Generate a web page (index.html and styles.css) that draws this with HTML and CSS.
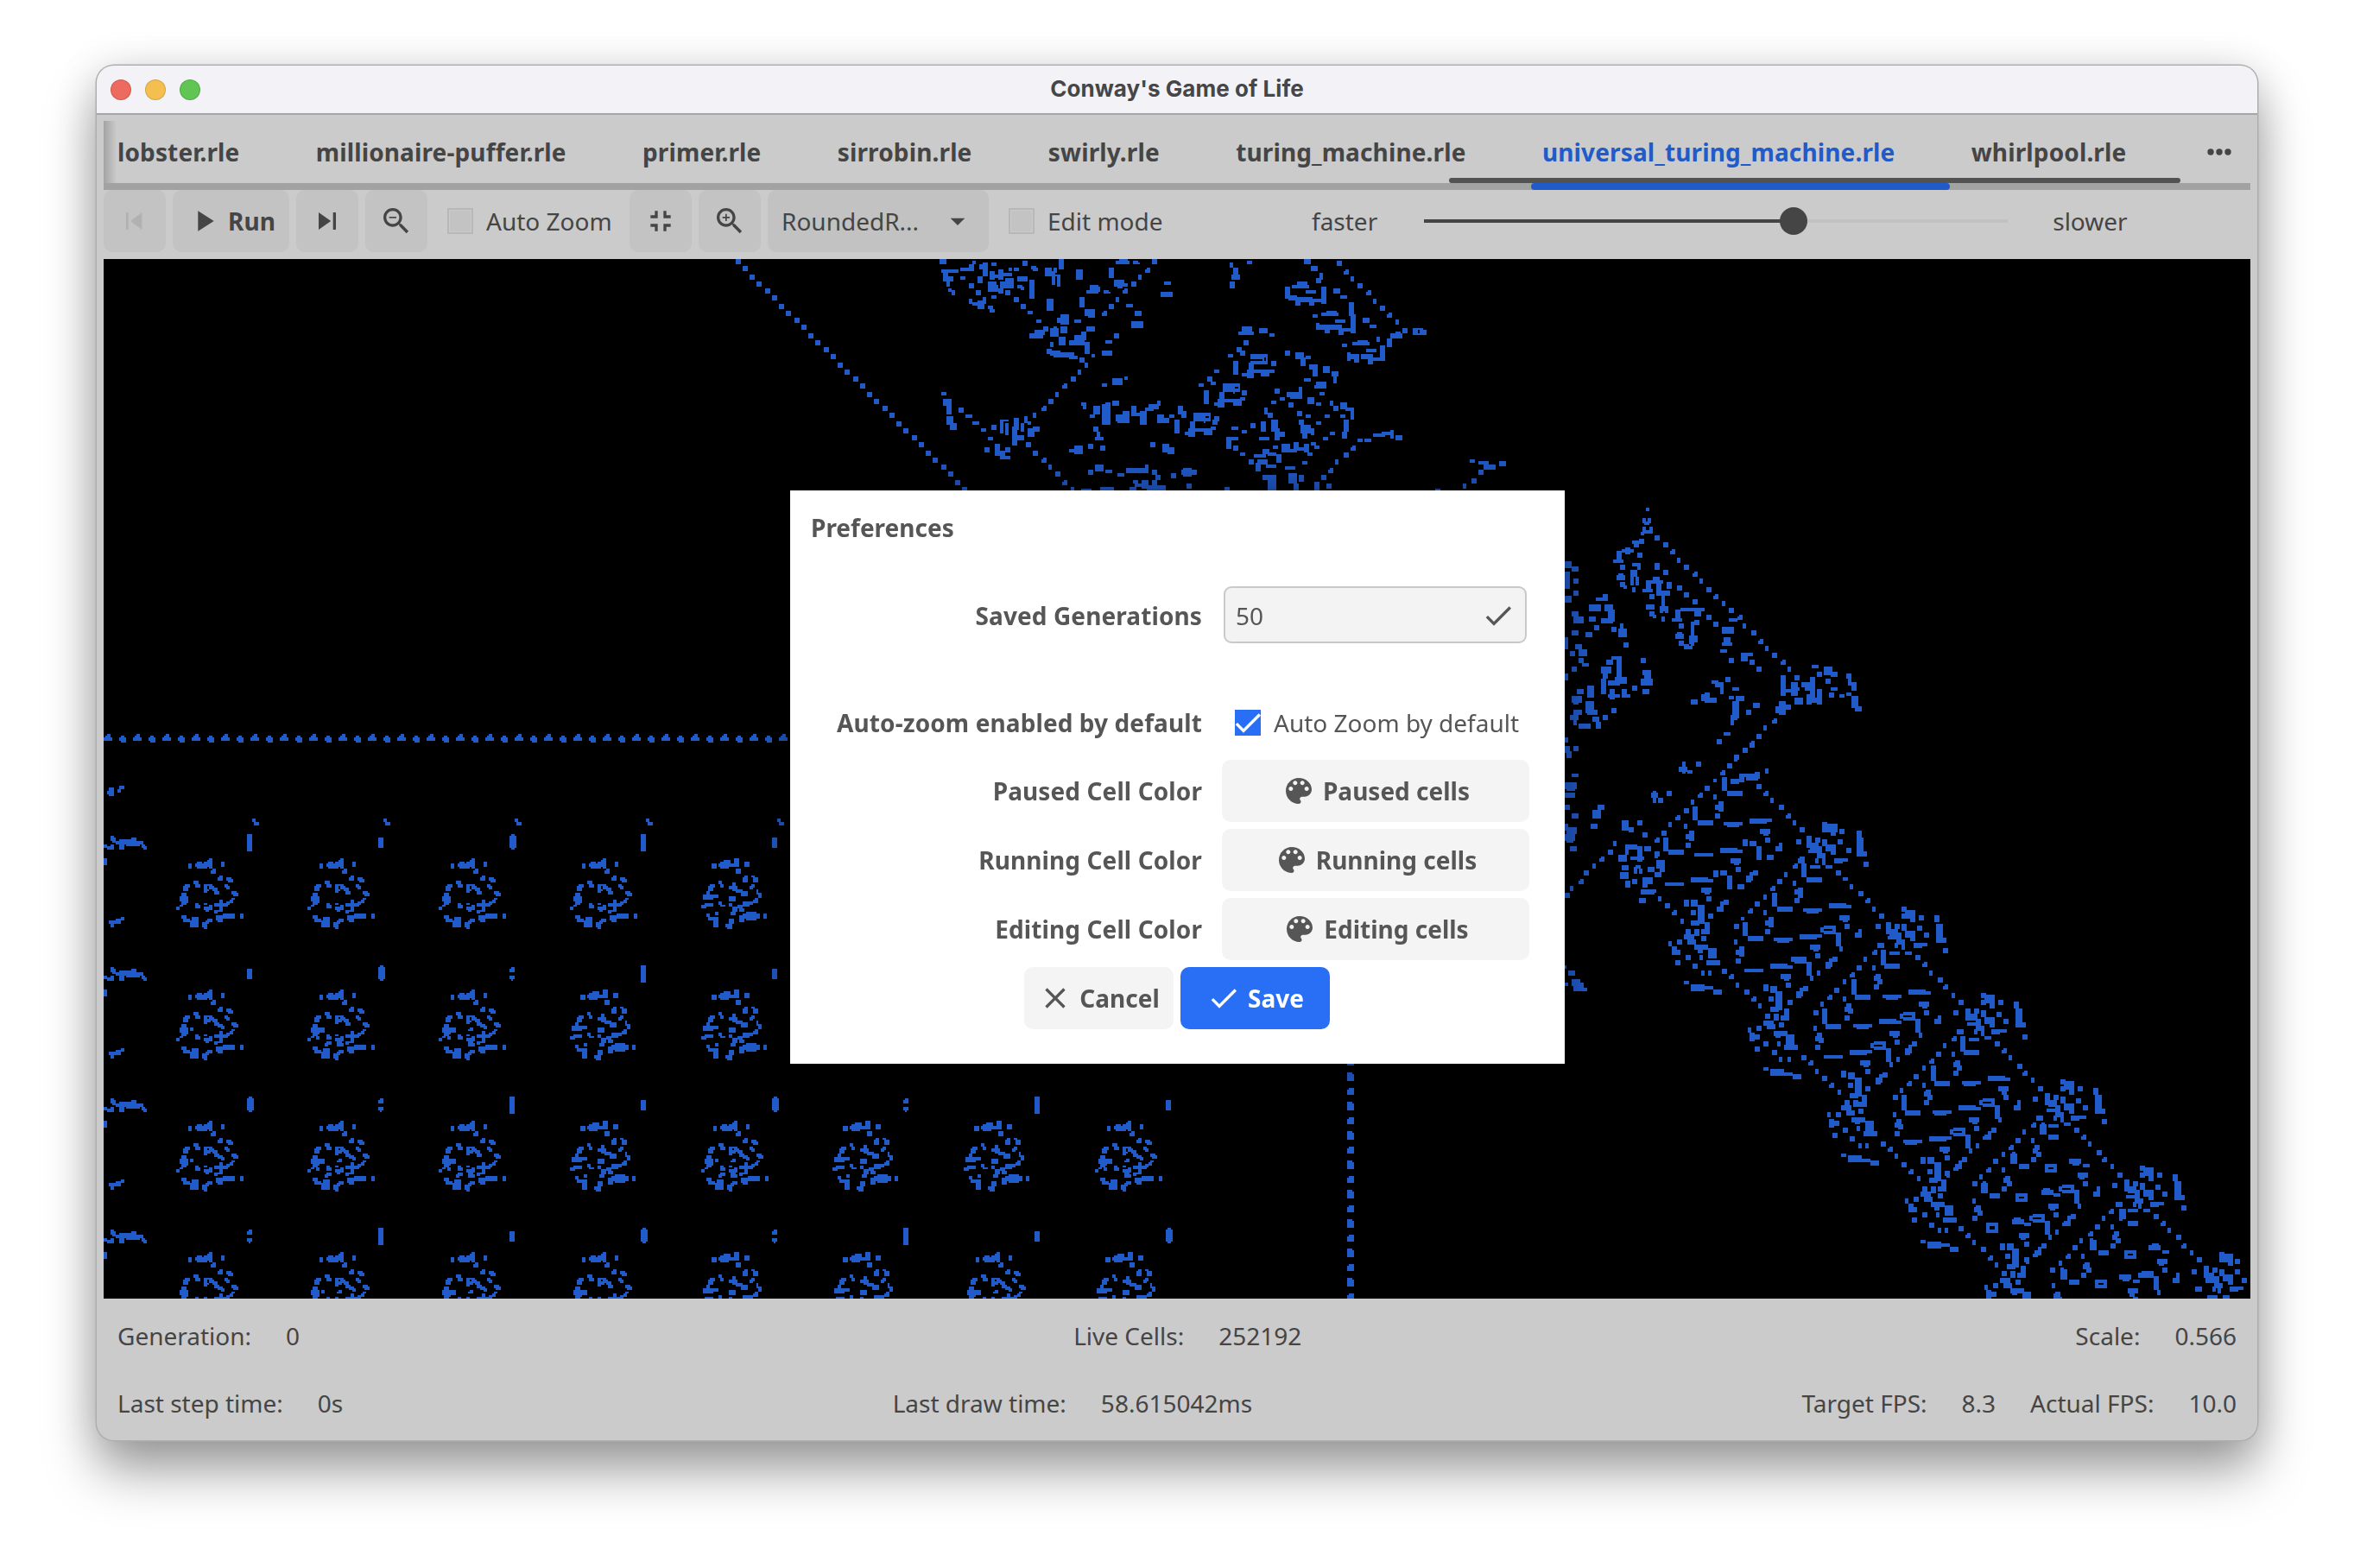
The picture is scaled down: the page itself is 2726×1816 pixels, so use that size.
FILE: index.html
```html
<!DOCTYPE html>
<html lang="en">
<head>
<meta charset="utf-8">
<title>Conway's Game of Life</title>
<link rel="stylesheet" href="styles.css">
</head>
<body>
<svg class="defs" width="0" height="0">
  <symbol id="palette" viewBox="0 0 24 24"><path d="M12 3c-4.97 0-9 4.03-9 9s4.03 9 9 9c.83 0 1.5-.67 1.5-1.5 0-.39-.15-.74-.39-1.01-.23-.26-.38-.61-.38-.99 0-.83.67-1.5 1.5-1.5H16c2.76 0 5-2.24 5-5 0-4.42-4.03-8-9-8zm-5.5 9c-.83 0-1.5-.67-1.5-1.5S5.67 9 6.5 9 8 9.67 8 10.500 7.330 12 6.500 12zm3-4C8.670 8 8 7.330 8 6.500S8.670 5 9.500 5s1.500.67 1.500 1.500S10.330 8 9.500 8zm5 0c-.83 0-1.500-.67-1.500-1.500S13.670 5 14.500 5s1.500.67 1.500 1.500S15.330 8 14.500 8zm3 4c-.83 0-1.500-.67-1.500-1.500S16.670 9 17.500 9s1.500.67 1.500 1.500-.67 1.500-1.500 1.500z"/></symbol>
  <symbol id="check" viewBox="0 0 24 24"><path d="M9 16.170L4.830 12l-1.420 1.410L9 19 21 7l-1.410-1.410z"/></symbol>
  <symbol id="lens" viewBox="0 0 24 24"><path d="M15.500 14h-.79l-.28-.27C15.410 12.590 16 11.110 16 9.500 16 5.910 13.090 3 9.500 3S3 5.910 3 9.500 5.910 16 9.500 16c1.610 0 3.090-.59 4.230-1.570l.27.28v.79l5 4.990L20.490 19l-4.990-5zm-6 0C7.010 14 5 11.990 5 9.500S7.010 5 9.500 5 14 7.010 14 9.500 11.990 14 9.500 14z"/></symbol>
</svg>
<main class="window">
  <header class="titlebar">
    <div class="lights"><i class="light red"></i><i class="light amber"></i><i class="light green"></i></div>
    <h1>Conway's Game of Life</h1>
  </header>
  <nav class="tabs">
    <span>lobster.rle</span><span>millionaire-puffer.rle</span><span>primer.rle</span><span>sirrobin.rle</span><span>swirly.rle</span><span>turing_machine.rle</span><span class="active">universal_turing_machine.rle</span><span>whirlpool.rle</span>
    <svg class="more" viewBox="0 0 28 8"><circle cx="4" cy="4" r="3.700"/><circle cx="14" cy="4" r="3.700"/><circle cx="24" cy="4" r="3.700"/></svg>
    <i class="scroll"></i><i class="marker"></i>
  </nav>
  <section class="toolbar">
    <button class="btn off"><svg class="icon" viewBox="0 0 24 24"><path d="M6 6h1.600v12H6zm3 6l8 6V6z"/></svg></button>
    <button class="btn run"><svg class="icon" viewBox="0 0 24 24"><path d="M8 5v14l11-7z"/></svg>Run</button>
    <button class="btn"><svg class="icon" viewBox="0 0 24 24"><path d="M6 18l8.500-6L6 6v12zM16 6v12h2V6h-2z"/></svg></button>
    <button class="btn"><svg class="icon" viewBox="0 0 24 24"><use href="#lens"/><path d="M7 9h5v1H7z"/></svg></button>
    <label class="check auto"><i class="box"></i>Auto Zoom</label>
    <button class="btn"><svg class="icon" viewBox="0 0 24 24"><path d="M5 16h3v3h2v-5H5v2zm3-8H5v2h5V5H8v3zm6 11h2v-3h3v-2h-5v5zm2-11V5h-2v5h5V8h-3z"/></svg></button>
    <button class="btn"><svg class="icon" viewBox="0 0 24 24"><use href="#lens"/><path d="M12 10h-2v2H9v-2H7V9h2V7h1v2h2v1z"/></svg></button>
    <div class="select"><span>RoundedR...</span><svg class="icon" viewBox="0 0 24 24"><path d="M7 10l5 5 5-5z"/></svg></div>
    <label class="check edit"><i class="box"></i>Edit mode</label>
    <span class="faster">faster</span>
    <div class="slider"><i class="done"></i><i class="thumb"></i></div>
    <span class="slower">slower</span>
  </section>
  <canvas class="world" id="world" width="2486" height="1204"></canvas>
  <footer class="status">
    <div class="row"><div><span>Generation:</span><span>0</span></div><div><span>Live Cells:</span><span>252192</span></div><div><span>Scale:</span><span>0.566</span></div></div>
    <div class="row"><div><span>Last step time:</span><span>0s</span></div><div><span>Last draw time:</span><span>58.615042ms</span></div><div><span>Target FPS:</span><span>8.3</span><span>Actual FPS:</span><span>10.0</span></div></div>
  </footer>
  <section class="dialog">
    <h2>Preferences</h2>
    <div class="form">
      <b class="saved">Saved Generations</b><div class="entry"><span>50</span><svg class="icon" viewBox="0 0 24 24"><use href="#check"/></svg></div>
      <b class="spaced">Auto-zoom enabled by default</b><label class="check spaced"><i class="box on"><svg viewBox="3 3 18 18"><use href="#check" width="24" height="24"/></svg></i>Auto Zoom by default</label>
      <b>Paused Cell Color</b><button class="btn"><svg class="icon" viewBox="0 0 24 24"><use href="#palette"/></svg>Paused cells</button>
      <b>Running Cell Color</b><button class="btn"><svg class="icon" viewBox="0 0 24 24"><use href="#palette"/></svg>Running cells</button>
      <b>Editing Cell Color</b><button class="btn"><svg class="icon" viewBox="0 0 24 24"><use href="#palette"/></svg>Editing cells</button>
    </div>
    <div class="actions">
      <button class="btn"><svg class="icon" viewBox="0 0 24 24"><path d="M19 6.410L17.590 5 12 10.590 6.410 5 5 6.410 10.590 12 5 17.590 6.410 19 12 13.410 17.590 19 19 17.590 13.410 12z"/></svg>Cancel</button>
      <button class="btn primary"><svg class="icon" viewBox="0 0 24 24"><use href="#check"/></svg>Save</button>
    </div>
  </section>
</main>
<script src="world.js"></script>
</body>
</html>
```
FILE: styles.css
```css
* { box-sizing: border-box; margin: 0; padding: 0; }
body { width: 2726px; height: 1816px; overflow: hidden; padding: 76px 112px; background: #fff; font: 28px/38px "Noto Sans", sans-serif; color: #454545; }
.defs { position: absolute; }
svg { display: block; fill: currentColor; }
.window { position: relative; width: 2502px; height: 1592px; display: flex; flex-direction: column; background: #cbcbcb; border-radius: 20px; box-shadow: 0 0 0 1.500px #aeaeae, 0 36px 60px rgba(0,0,0,.36), 0 4px 50px rgba(0,0,0,.14); }
.titlebar { position: relative; height: 57px; flex: none; display: flex; align-items: center; justify-content: center; padding-bottom: 1px; background: #f3f2f7; border-bottom: 2px solid #a6a6a8; border-radius: 20px 20px 0 0; }
.titlebar h1 { font: bold 26px/30px Inter, sans-serif; color: #464648; letter-spacing: .05px; }
.lights { position: absolute; left: 16px; top: 16px; display: flex; gap: 16px; }
.light { width: 24px; height: 24px; border-radius: 50%; border: 1px solid rgba(0,0,0,.14); }
.red { background: #ed6a5e; } .amber { background: #f5bf4f; } .green { background: #61c554; }
.tabs { position: relative; margin: 7px 8px 0; height: 80px; flex: none; display: flex; align-items: center; gap: 88.4px; padding: 0 22px 0 16px; font-weight: bold; letter-spacing: .13px; border-bottom: 8px solid #a2a2a2; }
.tabs::before { content: ""; position: absolute; left: 0; top: 0; width: 15px; height: 72px; background: linear-gradient(90deg, #a3a3a3, #cbcbcb); z-index: 0; }
.tabs span { position: relative; white-space: nowrap; }
.tabs .active { color: #215bca; }
.more { width: 28px; height: 8px; margin-left: auto; }
.scroll { position: absolute; left: 1558px; top: 66px; width: 847px; height: 6px; border-radius: 3px; background: #525252; }
.marker { position: absolute; left: 1653px; top: 72px; width: 485px; height: 8px; border-radius: 4px; background: #215bca; }
.toolbar { margin: 0 8px 8px; height: 72px; flex: none; display: flex; align-items: center; gap: 8px; }
.btn { width: 72px; height: 72px; flex: none; display: flex; align-items: center; justify-content: center; gap: 8px; border: 0; border-radius: 10px; background: #c3c3c3; color: inherit; font: bold 28px/38px "Noto Sans", sans-serif; white-space: nowrap; }
.btn.off { color: #b1b1b1; }
.btn.run { width: 135px; }
.icon { width: 40px; height: 40px; flex: none; }
.check { display: flex; align-items: center; gap: 15px; padding-left: 15px; white-space: nowrap; }
.auto { width: 218px; }
.edit { width: 358px; }
.box { width: 30px; height: 30px; border: 2px solid #b8b8b8; background: #c3c3c3; box-shadow: inset 0 0 0 1px #cbcbcb; }
.select { width: 256px; height: 72px; display: flex; align-items: center; justify-content: space-between; padding: 0 16px; border-radius: 10px; background: #c2c2c2; }
.slider { position: relative; width: 676px; height: 4px; margin-left: 46px; background: #c1c1c1; }
.done { position: absolute; left: 0; top: 0; width: 428px; height: 4px; background: #454545; }
.thumb { position: absolute; left: 412px; top: -14px; width: 32px; height: 32px; border-radius: 50%; background: #454545; }
.slower { margin-left: 44px; }
.world { display: block; width: 2486px; height: 1204px; margin: 0 8px; flex: none; background: #000; }
.status { flex: 1; display: flex; flex-direction: column; gap: 40px; padding: 24px 24px 0; }
.row { display: flex; justify-content: space-between; }
.row > div { display: flex; gap: 40px; }
.dialog { position: absolute; left: 803px; top: 492px; width: 897px; height: 664px; padding: 24px 0 0 24px; background: #fff; color: #565656; box-shadow: 0 0 50px rgba(0,0,0,.45); }
.dialog h2 { font-size: 28px; line-height: 38px; }
.form { display: grid; grid-template-columns: 453px 356px; column-gap: 23px; row-gap: 8px; margin-top: 46px; align-items: center; }
.form b { text-align: right; letter-spacing: .1px; }
.form > * { min-height: 38px; }
.form .saved { padding-top: 1px; }
.form .spaced { margin-top: 45px; }
.form .check.spaced { height: 72px; margin-bottom: -1px; }
.entry { height: 66px; margin: 3px 3px 3px 2px; padding: 1px 11px 0 12px; display: flex; align-items: center; justify-content: space-between; background: #f3f3f3; border: 2px solid #c9c9c9; border-radius: 9px; }
.box.on { border: 0; background: #296ff6; color: #fff; box-shadow: none; }
.dialog .btn { background: #f4f4f4; }
.form .btn { width: 356px; }
.actions { display: flex; gap: 8px; margin: 8px 0 0 247px; }
.actions .btn { width: 173px; }
.dialog .primary { background: #296ff6; color: #fff; }
```
FILE: world.js
```js
const ctx = document.getElementById('world').getContext('2d');
const CELL = 2;
ctx.fillStyle = '#215bca';

// A view maps pattern units to window pixels; the canvas starts at (120, 300).
const view = (ox, oy, sx, sy) => (x, y, w, h) => {
  const s = v => Math.round(v / CELL) * CELL;
  const l = s(ox + x / sx - 120), t = s(oy + y / sy - 300);
  const size = v => Math.max(CELL, Math.ceil(v / CELL - .35) * CELL);
  ctx.fillRect(l, t, size(w / sx), size(h / sy));
};
const nums = t => t.trim().split(/[\s;]+/).map(Number);
const rects = (v, t, dx = 0, dy = 0) => {
  const n = nums(t);
  for (let i = 0; i + 3 < n.length; i += 4) v(n[i] + dx, n[i + 1] + dy, n[i + 2], n[i + 3]);
};
// small gliders: two stacked bars, the upper one shifted on alternate ones
const dots = (v, t, w, h, dx = 0, dy = 0) => {
  const n = nums(t);
  for (let i = 0; i + 1 < n.length; i += 2) {
    const x = n[i] + dx, y = n[i + 1] + dy, k = (i / 2) % 3;
    v(x + (k === 1 ? w / 3 : 0), y, w * (k === 0 ? 1 : 2 / 3), h / 3);
    v(x, y + h / 3, w * (k === 2 ? 2 / 3 : 1), h * 2 / 3);
  }
};

// memory cells of the tape stack
const memory = `7 3 2 3;11 3 4 2;12 2 3 4;14 3 4 3;16 2 2 4;18 1 2 4;19 0 2 6;26 2 2 3;20 7 3 2;21 6 2 1;24 11 3 2;25 10 2 1;
29 11 3 2;30 12 3 2;28 15 2 2;29 16 2 2;4 16 3 3;5 15 3 2;10 13 3 2;11 15 3 2;16 15 5 1;16 16 2 4;18 18 1 1;19 16 3 2;21 17 3 2;22 19 3 2;
32 19 3 2;33 20 3 2;3 20 3 2;2 22 5 3;3 25 4 1;3 26 3 1;2 27 2 1;0 28 2 2;11 26 2 1;11 27 3 2;16 26 2 1;16 28 5 2;17 30 2 1;19 27 2 2;22 26 4 2;
25 24 2 7;27 26 3 2;29 25 2 2;31 24 2 2;32 23 2 1;22 30 4 1;22 31 2 1;3 33 3 2;4 35 4 2;8 36 4 4;9 34 4 6;15 37 3 3;17 36 2 2;18 35 3 2;16 40 2 1;
23 33 5 2;23 34 4 2;24 36 3 1;27 32 5 3;31 32 3 3;37 32 2 3`;
const written = `6 3 3 3;10 3 12 2;11 2 5 4;13 1 4 2;19 0 3 5;25 2 3 3;20 6 3 3;24 11 3 3;25 10 2 1;29 10 2 1;30 11 3 3;28 16 2 2;29 15 2 2;4 16 3 3;5 15 3 2;
10 13 2 2;11 15 2 2;16 16 5 2;18 14 2 5;20 18 4 2;23 19 4 3;32 18 1 3;33 20 2 3;1 21 6 3;3 19 2 3;7 21 3 2;0 27 3 2;2 26 5 2;10 25 2 2;11 27 3 1;
16 22 4 3;16 26 2 2;18 28 3 3;17 31 3 2;21 27 3 2;24 25 4 3;27 25 3 2;30 24 3 2;31 23 2 2;22 29 3 2;8 31 2 2;3 32 2 2;4 34 4 2;7 36 3 4;8 34 2 5;
14 38 4 2;15 40 3 1;16 35 3 3;22 33 3 4;24 32 10 3;26 31 6 5;36 32 2 3`;
const extras = ['18 22 2 2;17 23 3 1', '11 30 3 2;10 31 2 2', '6 22 4 3;5 27 2 2', '17 29 3 4;19 31 2 2', '24 20 3 2;26 21 2 2', '16 17 4 2;8 22 2 2'];
const ticks = ['41 -14 3 10', '41 -12 3 6', '41 -13 4 7;42 -14 2 9', '42 -13 2 3;41 -12 3 2;41 -8 3 2;42 -6 1 1'];
for (let r = 0; r < 4; r++) {
  for (let k = 0; k < 8; k++) {
    const v = view(204 + 152 * k, 994 + 152 * r, .5, .5);
    const filled = k > 2 && (r + k) % 3 !== 0;
    rects(v, filled ? written : memory);
    if (!filled) extras.forEach((e, i) => { if (r && (k * 5 + r * 3 + i * 7) % 4 !== 0 && (k || i > 3)) rects(v, e); });
    rects(v, ticks[r < 1 ? k % 3 : (k + r) % 4]);
    if (r === 0) rects(v, '44 -23 2 2;45 -21 3 2');
  }
  const e = view(120, 968 + 152 * r, .5, .5);
  rects(e, '0 5 2 2;2 6 4 2;4 5 2 2;4 0 2 3;5 1 2 3;7 3 5 2;9 2 5 3;9 5 3 3;13 2 6 4;16 1 3 2;18 3 3 3;21 3 2 2;22 5 2 2;23 6 2 2;0 13 2 4');
  rects(e, '3 49 5 2;4 51 2 2;7 48 3 3;10 47 2 2');
}
rects(view(120, 910, .5, .5), '2 3 4 2;3 1 3 5;8 2 2 2;9 0 3 2');

// glider streams
for (let x = 120; x < 960; x += 34) rects(view(x, 850, .5, .5), '0 2 5 2;1 1 3 1;2 0 2 1;10 1 2 4;9 2 4 2;11 4 2 1');
for (let y = 1226; y < 1504; y += 34) rects(view(1560, y, .5, .5), '1 0 3 4;0 1 4 3;0 8 3 5;0 9 4 4');
for (let i = 0; i < 32; i++) dots(view(851 + i * 8.5, 300 + i * 8.5, 1, 1), '0 0', 6, 6);

// glider guns at the top
const guns = view(1060, 290, 2.24, 3);
rects(guns, `64 30 17 17;68 66 44 12;72 78 14 12;72 90 24 20;82 108 10 16;86 130 10 10;92 138 10 16;
117 60 22 10;138 48 14 26;148 36 8 12;117 90 14 14;139 114 12 16;166 48 12 18;175 40 12 50;198 40 12 12;162 88 12 22;157 138 12 16;139 168 10 16;148 178 18 12;162 172 18 30;176 162 10 22;189 192 12 10;193 204 12 10;198 158 12 14;
193 72 12 28;204 84 22 12;216 66 12 38;226 78 24 14;240 60 10 14;256 62 12 14;188 108 20 16;190 120 24 22;216 130 12 16;220 108 30 22;234 96 20 34;234 138 12 16;
264 90 26 16;264 120 14 12;272 128 10 14;296 100 12 66;256 162 12 16;278 36 12 16;300 54 12 12;306 62 12 14;274 186 12 16;292 212 12 14;312 240 12 14;
337 62 16 30;346 70 16 12;358 60 10 18;372 30 12 34;354 84 8 38;358 84 18 8;368 90 8 34;340 168 18 40;418 66 16 38;426 162 12 34;
453 120 22 28;444 138 14 14;466 126 14 20;488 138 12 12;494 146 12 8;502 60 12 34;520 34 34 12;530 30 22 8;564 38 12 10;570 44 12 8;
516 102 26 24;524 100 14 30;540 112 8 14;440 206 28 22;446 204 16 30;548 186 16 14;570 210 16 16;646 108 16 14;636 146 30 20;560 246 30 22;
376 222 22 34;368 234 32 16;412 240 16 14;297 288 34 18;310 276 24 20;330 264 12 18;350 268 20 28;358 264 10 34;376 262 16 24;444 264 22 16;
372 300 16 28;350 318 10 16;400 310 40 16;414 294 26 30;430 284 12 30;438 318 12 40;494 312 16 14;514 288 12 16;486 350 28 20;
340 342 12 18;350 348 26 16;358 362 28 14;376 352 34 16;398 366 22 14;426 374 12 20;440 390 10 16;458 362 10 14;
67 492 14 14;72 516 20 22;82 538 14 30;80 576 18 28;90 600 16 22;112 546 12 16;130 572 16 14;150 596 16 14;170 620 14 14;188 648 12 14;
220 590 8 50;222 590 18 8;232 598 8 40;198 608 12 18;256 584 12 40;250 610 12 66;262 640 20 16;274 598 10 30;280 576 10 24;292 596 8 14;292 618 16 32;304 612 18 16;288 668 12 16;
180 684 14 20;207 674 12 42;220 696 12 30;234 684 12 18;220 712 24 14;486 464 12 14;512 446 28 14;512 458 24 14;540 440 10 14;
430 530 12 12;436 538 10 12;462 542 16 28;454 570 14 14;484 534 20 70;492 530 14 30;510 524 18 18;520 572 20 24;526 584 30 20;538 556 16 40;560 542 14 36;566 566 16 14;582 560 16 50;596 548 20 14;606 536 24 20;626 524 8 20;
628 572 16 28;644 584 14 16;658 572 14 14;462 614 12 20;470 632 10 26;466 650 22 14;480 680 12 18;448 670 12 18;400 690 34 14;412 676 20 30;610 666 12 20;642 674 18 30;652 684 18 24;
680 542 14 30;688 560 12 26;772 612 8 14;775 578 12 16;775 414 14 14;758 440 12 16;766 458 12 14;736 464 12 14;852 312 14 16;834 338 12 16;842 350 12 18;812 362 12 14;
846 264 26 24;838 284 40 14;892 272 22 18;920 290 14 14;816 42 10 18;826 60 12 40;820 84 20 16;816 108 14 22;862 38 14 14;1008 30 16 16;1028 54 16 16;1048 76 10 22;1040 98 12 18;
1054 126 14 60;958 126 12 44;1124 180 12 50;1130 220 12 66;1206 332 12 54;1118 356 10 30;1040 254 8 24;1030 220 12 14;1108 324 12 12;
1086 132 16 16;1104 156 16 14;1160 234 16 16;1180 258 16 14;1224 306 12 28;1232 290 30 16;1244 280 14 24;1264 270 12 16;1288 272 12 26;1300 272 16 8;1300 290 24 8;1310 276 16 18;1194 300 8 20;
960 350 12 16;984 356 22 24;998 374 12 28;1012 368 12 10;1020 398 20 16;1030 408 14 28;1056 404 16 24;1080 420 16 16;1084 436 8 24;1008 446 16 14;1040 454 24 22;1034 468 14 14;1048 492 14 14;
934 482 12 18;946 510 12 14;964 490 38 20;972 500 28 16;994 476 8 40;924 524 12 14;906 546 10 24;914 562 14 18;968 530 12 18;1016 510 18 26;1040 526 12 14;1076 524 10 20;1084 540 14 20;1104 530 18 24;1116 544 20 14;1128 550 8 34;1104 572 12 14;1112 586 14 40;1106 628 14 22;
988 558 12 16;1014 572 14 14;1062 572 12 14;1040 596 12 14;994 590 12 20;1000 608 26 32;1004 632 12 26;1026 616 10 22;1076 628 12 12;1056 650 12 14;
870 600 12 16;894 596 14 36;924 590 16 40;930 620 14 42;940 630 18 16;892 650 26 12;820 614 16 12;848 626 12 14;808 650 32 12;808 660 14 32;824 680 14 16;844 704 12 14;866 726 12 16;884 740 12 32;
928 680 12 12;950 672 22 28;960 690 30 14;982 668 12 28;994 684 28 12;1008 670 14 28;1024 668 14 14;1036 680 12 14;1016 704 12 14;1002 732 12 14;900 690 16 20;880 710 30 12;888 728 24 16;916 700 20 12;936 706 12 30;910 742 28 12;
900 780 36 16;912 790 20 44;960 752 28 14;966 774 22 34;994 780 12 22;980 808 12 26;1034 804 12 30;1066 810 12 20;
1148 656 12 14;1166 652 16 14;1186 638 30 14;1210 630 32 14;1232 626 10 30;1244 644 16 18;1436 728 14 14;1460 734 28 14;1474 746 30 18;1462 762 12 16;1514 734 16 16;1444 792 12 16;1422 812 10 20;1348 828 12 6;
446 764 14 20;466 746 22 24;494 764 16 14;526 776 16 14;548 758 54 18;594 746 10 30;614 764 12 20;622 780 12 20;664 776 14 16;690 762 38 16;696 758 22 30;586 798 18 22;564 800 12 12;570 812 30 12;556 824 16 10;588 816 60 10;612 800 14 20;600 824 50 10;704 812 14 20;804 820 14 14;480 824 34 10;430 828 24 6`);
dots(guns, `614 30 596 60 578 84 560 108 538 132 520 162 502 186 484 212 422 414 404 438 382 462 364 492 346 516 328 540 306 566
306 696 328 720 344 744 364 768 382 798 403 822 1094 38 1112 66 1130 92 1148 116 1170 138 1188 168 1206 192 1224 218 1246 240 1054 780 1072 756 1090 728 1112 702 1130 678`, 13, 17);
const eater = '46 0 46 12;46 12 30 8;76 0 6 34;86 0 6 30;46 20 44 12;40 30 14 24;36 54 60 12;34 66 16 20;74 54 20 26;94 50 12 12;98 22 14 16;0 22 14 48;24 64 14 12';
[[824, 362], [750, 462], [674, 564]].forEach(([x, y]) => rects(guns, eater, x, y));
const shuttle = '24 14 42 14;38 4 24 18;14 54 20 20;30 56 12 28;46 56 30 18;66 66 12 26;60 36 24 14;76 64 20 12';
[[954, 104], [1030, 204], [1108, 306]].forEach(([x, y]) => rects(guns, shuttle, x, y));

// head of the finite state machine, right of the centre
const head = view(1800, 560, 3, 2.613);
rects(head, `318 73 12 11;306 105 12 16;324 105 12 16;312 116 18 8;306 132 12 22;318 142 18 12;330 132 10 20;300 146 10 12;348 158 18 14;
270 172 24 12;294 168 18 14;276 182 18 10;246 194 18 20;234 200 42 10;216 204 18 30;204 230 36 10;288 210 18 16;228 246 18 14;270 240 30 10;264 260 24 18;264 280 12 26;282 280 10 26;288 246 10 16;216 277 30 14;222 272 18 20;228 298 18 14;240 308 12 10;270 314 12 14;
348 240 18 18;378 262 18 14;318 292 60 12;318 300 16 20;306 318 36 10;354 296 18 40;342 284 24 10;390 300 16 20;330 335 18 14;372 325 12 60;384 325 18 16;366 372 12 22;384 372 12 22;318 366 30 16;330 388 18 16;342 398 12 10;372 403 12 14;426 308 18 14;450 330 18 14;480 350 18 14;
420 382 16 30;408 408 36 10;438 376 82 12;486 388 24 14;432 424 18 14;420 455 30 16;426 450 20 10;432 478 20 14;450 486 18 16;474 418 12 70;486 413 18 14;468 462 14 26;486 462 12 22;462 490 20 12;528 398 18 14;552 418 18 14;
606 410 30 12;582 434 42 18;588 465 24 24;582 482 36 10;576 504 24 12;606 530 18 14;648 512 24 24;672 510 18 12;678 534 18 14;702 556 18 16;
36 236 24 20;60 250 24 14;36 268 18 50;66 290 18 16;66 325 18 14;36 342 24 20;60 388 24 14;66 405 36 18;60 442 24 14;36 465 12 35;54 508 18 14;72 484 24 14;84 500 30 20;84 530 20 14;96 544 24 12;60 556 18 16;36 576 12 18;
144 344 36 12;168 336 18 18;120 366 42 18;174 366 30 20;186 380 22 36;120 400 22 14;162 406 40 16;138 430 18 14;108 450 22 14;198 434 16 14;222 440 30 24;230 424 10 20;240 482 18 14;
180 534 24 14;198 524 36 12;216 534 20 24;162 556 36 20;168 576 20 16;218 560 20 40;162 590 18 48;186 595 40 14;210 586 40 20;192 620 20 30;186 636 40 12;234 620 20 26;248 640 16 12;270 614 18 14;
300 528 18 14;306 565 30 16;312 580 24 20;300 592 42 18;306 624 24 16;78 620 22 16;114 614 22 34;60 644 36 20;66 660 20 12;108 660 30 36;66 682 30 14;54 700 28 16;66 714 14 16;114 684 34 14;132 706 24 14;144 720 18 20;84 726 40 14;168 700 18 14;198 680 18 14;
36 770 12 14;66 792 18 14;36 796 18 18;42 812 18 18;546 596 22 12;560 602 30 14;576 612 14 24;594 586 18 14;618 618 22 12;606 644 18 12;630 644 30 16;620 656 26 50;612 700 24 16;612 712 14 18;474 654 22 14;510 640 28 20;522 634 18 30;540 650 24 16;666 686 18 14;690 664 22 14;588 754 24 12;564 776 18 14;
786 580 18 64;804 620 30 12;822 602 22 40;842 618 14 12;858 602 46 16;870 618 36 12;888 586 16 80;876 636 20 30;834 650 28 18;912 620 18 44;900 648 24 14;910 570 18 14;894 550 22 12;936 555 30 24;960 570 22 14;942 592 18 14;960 618 24 12;954 632 18 14;990 640 18 12;1014 576 16 14;1020 586 12 26;1032 602 18 24;1014 634 20 12;1032 644 24 34;1046 676 22 14;780 656 22 40;768 676 30 20;804 670 18 14;
432 856 30 16;444 842 12 36;462 866 18 10;492 842 18 14;336 938 24 16;342 930 12 36;360 952 18 14;390 930 18 14;
60 880 24 12;36 906 42 18;42 922 30 12;36 936 36 16;36 974 18 14;60 1000 24 16;36 1030 10 20;42 1038 34 20;36 1060 36 22;42 1076 24 12;54 1098 24 14;132 990 30 26;150 974 24 16;126 1032 24 16;
48 1476 22 14;36 1456 6 12;60 1500 30 18;66 1512 36 24;84 1528 30 12;36 1508 12 12;236 1020 22 28;258 1040 18 14;288 1020 18 14;306 1056 18 14;
246 1090 40 14;246 1104 14 20;222 1124 30 18;264 1130 50 10;288 1100 18 48;312 1100 22 14;234 1156 22 14;228 1178 30 18;246 1200 18 20;276 1160 12 20;282 1156 20 10;292 1164 12 16;270 1196 18 14;324 1160 24 14;354 1140 28 22;348 1114 18 14;348 1176 18 14;306 1192 36 18;300 1226 48 16;294 1256 22 14`);
dots(head, `378 178 402 200 426 224 450 248 480 267 504 290 528 312 552 335 582 355 606 378 636 398 654 424 684 444 708 468 732 490 756 513 786 534 810 556 834 578
756 712 726 732 702 758 678 780 654 800 624 822 600 848 204 1084 186 1108 156 1130 132 1150 102 1172 84 1198 54 1218 36 1240`, 18, 15);

// body of the machine: the same section repeated down the diagonal
const body = view(1880, 860, 2.178, 2.39);
const knot = `501 218 12 12;501 236 12 12;512 224 24 24;524 246 12 14;544 238 14 12;586 242 12 20;590 262 16 50;602 300 12 16;606 330 14 14;434 266 14 16;462 258 12 34;470 276 20 18;484 262 12 12;502 266 12 20;490 288 12 14;510 284 14 18;466 298 34 10;488 308 20 12;484 318 8 14;500 318 10 18;472 340 24 10;510 338 16 10;524 284 12 30;530 318 20 14;540 270 12 16;560 290 12 12;548 318 18 9;440 318 18 14`;
const tail = `152 434 14 18;170 436 16 18;186 450 16 50;168 466 12 14;214 474 14 12;172 494 20 14;158 514 14 14;180 514 12 20;152 530 24 12;162 544 20 12;204 498 14 28;196 518 22 16;194 536 14 12;
114 550 10 16;120 566 12 22;136 546 12 14;132 572 14 16;130 604 14 12;156 590 12 16;174 614 14 14;178 560 34 12;186 572 12 10;190 588 10 14;212 570 20 28;208 600 36 16;194 632 10 12;214 632 8 12;152 662 14 10;170 668 34 20;196 676 30 10;226 682 20 12`;
for (let s = 0; s < 6; s++) {
  const dx = s * 200, dy = s * 238.5;
  rects(body, knot, dx, s * 238);
  rects(body, tail, s * 199, s * 237.5);
  dots(body, '336 113 354 132 372 152 392 172 408 194 428 214 446 234', 13, 14, dx, dy);
  dots(body, '50 388 68 404 86 426 104 446 122 466 142 486', 13, 14, s * 199, s * 238);
  dots(body, (s ? '' : '318 0 302 16 280 36 262 58 ') + '244 78 226 98 206 118 188 140 170 160 152 180 132 200 114 222 96 242 78 262', 13, 14, dx, dy);
  dots(body, '328 352 308 372 290 392 254 434 234 456 214 474', 13, 14, dx, dy);
  if (s === 0) rects(body, '290 88 50 8;290 96 12 12;308 96 32 8;330 80 14 20;272 102 20 12;356 74 10 14');
  for (let j = 0; j < 4; j++) {
    const x = dx - 74 * j, y = dy + 82 * j;
    if (j) rects(body, '306 88 14 12;312 80 12 16;314 96 12 12;304 112 12 16;302 60 10 16', x, y);
    if (j > 2) continue;
    if (s < 4) rects(body, s < 2 ? '248 97 13 38;262 134 40 13' : '248 97 12 44;256 137 38 12', x, y);
    else rects(body, '248 100 18 26;252 96 10 34;270 130 26 12', x, y);
    if (s < 4) {
      rects(body, '318 208 44 14;254 222 46 8;260 230 30 6', x, y);
    } else {
      rects(body, '264 212 30 7;264 228 30 7;264 217 9 14;286 217 9 14;326 200 28 12;332 196 16 20', x, y);
    }
    rects(body, '358 212 16 10;346 238 24 12;352 248 12 10;358 262 14 14;384 288 16 14;394 276 10 14', x, y);
    if (j < 2) rects(body, s < 1 ? '302 270 12 18;318 272 18 14;334 288 14 38;362 310 16 12' : '298 274 10 14;306 270 28 9;306 282 28 9;328 274 10 12;336 286 12 38;346 324 10 14', x, y);
  }
}
```
